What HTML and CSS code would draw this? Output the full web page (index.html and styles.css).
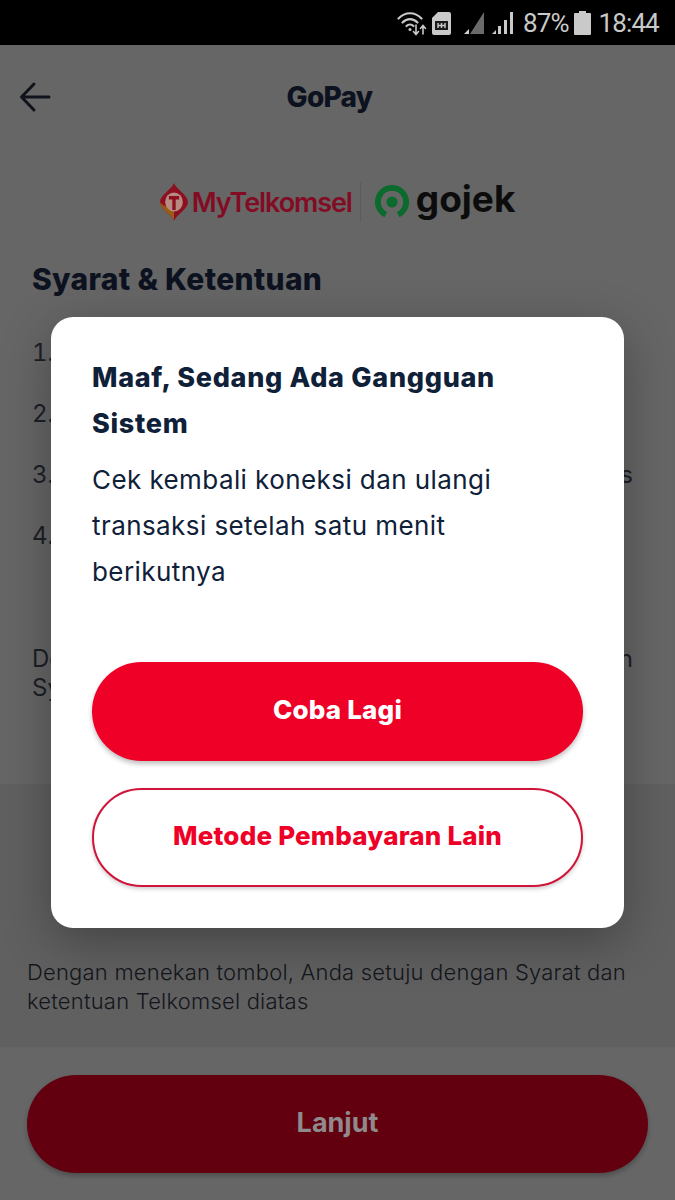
FILE: index.html
```html
<!DOCTYPE html>
<html lang="id">
<head>
<meta charset="utf-8">
<title>GoPay</title>
<link rel="stylesheet" href="styles.css">
</head>
<body>
<div class="screen">
  <div class="statusbar">
    <svg class="ic-wifi" width="32" height="26" viewBox="0 0 32 26" fill="none" stroke="#c9c9c9" stroke-linecap="round">
      <path d="M1.500 8.500C8 1.500 18 1.500 24.500 8.500" stroke-width="2.200"/>
      <path d="M5.500 12.500C10 8 16 8 20.500 12.500" stroke-width="2.200"/>
      <path d="M9.500 16C11.500 14 14.500 14 16.500 16" stroke-width="2.200"/>
      <circle cx="13" cy="19.500" r="1.500" fill="#c9c9c9" stroke="none"/>
      <path d="M19 15v9M16.500 21.500l2.500 3 2.500-3" stroke-width="1.600"/>
      <path d="M26 24v-8M23.500 18.500l2.500-3 2.500 3" stroke-width="1.600"/>
    </svg>
    <svg class="ic-sim" width="21" height="24" viewBox="0 0 21 24">
      <path d="M7 1h11a2 2 0 0 1 2 2v19a2 2 0 0 1-2 2H3a2 2 0 0 1-2-2V7z" fill="#c9c9c9"/>
      <path d="M4 10h13v9H4z" fill="#1a1a1a"/>
      <path d="M7 12v5M14 12v5M7 14.500h7M10.500 12v5" stroke="#c9c9c9" stroke-width="1.400" fill="none"/>
    </svg>
    <svg class="ic-sig1" width="22" height="24" viewBox="0 0 22 24">
      <path d="M21 1v22H7z" fill="#6a6a6a"/>
      <path d="M1 23l5-5v5z" fill="#d0d0d0"/>
    </svg>
    <svg class="ic-sig2" width="22" height="24" viewBox="0 0 22 24" fill="#c9c9c9">
      <path d="M0 23l4-4v4z"/>
      <rect x="6" y="15" width="3" height="8"/>
      <rect x="12" y="9" width="3" height="14"/>
      <rect x="18" y="1" width="3" height="22"/>
    </svg>
    <span class="st-pct">87%</span>
    <svg class="ic-bat" width="17" height="24" viewBox="0 0 17 24">
      <path d="M5 0h7v2h4a1 1 0 0 1 1 1v20a1 1 0 0 1-1 1H1a1 1 0 0 1-1-1V3a1 1 0 0 1 1-1h4z" fill="#c9c9c9"/>
    </svg>
    <span class="st-time">18:44</span>
  </div>

  <main class="content">
    <header class="appbar">
      <svg class="back" width="32" height="32" viewBox="0 0 32 32" fill="none" stroke="#10131c" stroke-width="3" stroke-linecap="round" stroke-linejoin="round">
        <path d="M30 16H3M15 3L2.500 16 15 29"/>
      </svg>
      <h1 class="appbar-title">GoPay</h1>
    </header>

    <div class="logos">
      <svg class="tsel-mark" width="28" height="38" viewBox="0 0 30 38" preserveAspectRatio="none">
        <path d="M15 0C17 6 30 12 30 19C30 26 17 32 15 38C13 32 0 26 0 19C0 12 13 6 15 0Z" fill="#8c1020"/>
        <path d="M15 38C13 32 0 26 0 19C4 24 12 26 15 26Z" fill="#9a5a18"/>
        <circle cx="15" cy="19" r="9.500" fill="#b78a82"/>
        <path d="M9.500 13h11v3.500h-3.700V27h-3.600V16.500H9.500z" fill="#8c1020"/>
      </svg>
      <span class="tsel-name">MyTelkomsel</span>
      <span class="logo-sep"></span>
      <svg class="gojek-mark" width="34" height="34" viewBox="0 0 34 34">
        <path d="M17 0a17 17 0 0 1 7.500 32.300l-2.600-5.300a11.200 11.200 0 1 0-9.800 0l-2.600 5.300A17 17 0 0 1 17 0z" fill="#0a6b2c"/>
        <circle cx="17" cy="17" r="5.500" fill="#0a6b2c"/>
      </svg>
      <span class="gojek-name">gojek</span>
    </div>

    <h2 class="terms-title">Syarat &amp; Ketentuan</h2>
    <ol class="terms">
      <li class="term">Pembayaran berlaku untuk pelanggan</li>
      <li class="term">Saldo GoPay harus mencukupi</li>
      <li class="term term-fill">Berlaku untuk pembelian paket yang lunas</li>
      <li class="term">Pembelian tidak dapat dibatalkan</li>
    </ol>
    <p class="terms-note"><span class="note-fill">Dengan melanjutkan, Anda menyetujui ketentuan</span><br>Syarat dan ketentuan layanan</p>
  </main>

  <section class="agree">
    <p class="agree-text">Dengan menekan tombol, Anda setuju dengan Syarat dan ketentuan Telkomsel diatas</p>
  </section>

  <footer class="footer">
    <button class="btn-next" type="button">Lanjut</button>
  </footer>

  <div class="modal" role="dialog">
    <h3 class="modal-title">Maaf, Sedang Ada Gangguan Sistem</h3>
    <p class="modal-body">Cek kembali koneksi dan ulangi transaksi setelah satu menit berikutnya</p>
    <div class="modal-actions">
      <button class="btn btn-primary" type="button">Coba Lagi</button>
      <button class="btn btn-outline" type="button">Metode Pembayaran Lain</button>
    </div>
  </div>
</div>
</body>
</html>
```
FILE: styles.css
```css
* { box-sizing: border-box; }
html, body { margin: 0; padding: 0; }
body { font-family: Inter, "Liberation Sans", sans-serif; background: #666; color: #10131c; }
h1, h2, h3, p, ol { margin: 0; padding: 0; }

.screen { position: relative; width: 675px; height: 1200px; display: flex; flex-direction: column; overflow: hidden; background: #666; }

.statusbar { height: 45px; flex: none; background: #000; display: flex; align-items: center; padding: 0 0 0 397px; color: #c9c9c9; font-family: Roboto, sans-serif; font-size: 26px; letter-spacing: -0.9px; white-space: nowrap; }
.ic-sim { margin-left: 2px; }
.ic-sig1 { margin-left: 11px; }
.ic-sig2 { margin-left: 7px; }
.st-pct { margin-left: 9px; }
.ic-bat { margin-left: 5px; }
.st-time { margin-left: 8px; }

.content { height: 739px; flex: none; padding: 0 32px; }

.appbar { height: 104px; position: relative; display: flex; align-items: center; justify-content: center; padding-right: 16px; }
.back { position: absolute; left: -13px; top: 36px; }
.appbar-title { font-size: 28px; font-weight: 800; letter-spacing: -0.7px; color: #0d1220; }

.logos { display: flex; align-items: center; justify-content: center; height: 48px; margin-top: 29px; }
.tsel-name { font-family: Inter, sans-serif; font-size: 27px; font-weight: 600; letter-spacing: -1.1px; color: #820c24; margin-left: 4px; }
.logo-sep { width: 1px; height: 40px; background: #5c5c5c; margin: 0 14px 0 8px; }
.gojek-name { font-family: Inter, sans-serif; font-size: 37px; font-weight: 700; color: #0c0c0c; margin-left: 7px; line-height: 36px; margin-top: -6px; }

.terms-title { font-size: 30px; font-weight: 800; letter-spacing: 0.3px; color: #0d1220; margin-top: 33px; line-height: 40px; }

.terms { list-style-position: inside; margin-top: 36px; font-size: 24px; line-height: 36px; color: #1c1f26; }
.term { margin-bottom: 25px; white-space: nowrap; overflow: hidden; width: 100%; }
.term-fill { width: 601px; text-align-last: justify; }

.terms-note { margin-top: 90px; font-size: 24px; line-height: 29px; color: #1c1f26; white-space: nowrap; }
.note-fill { display: inline-block; width: 601px; text-align-last: justify; }

.agree { height: 263px; flex: none; background: #606060; display: flex; flex-direction: column; justify-content: flex-end; padding: 0 27px 31px; }
.agree-text { font-size: 22px; font-weight: 300; letter-spacing: 0.2px; line-height: 29px; color: #14161c; }

.footer { flex: 1; padding: 28px 27px 0; }
.btn-next { display: block; width: 100%; height: 98px; padding-bottom: 4px; border: 0; border-radius: 49px; background: #620010; color: #8f8a8b; font-family: inherit; font-size: 27px; font-weight: 700; box-shadow: 0 3px 5px rgba(0,0,0,.25); }

.modal { position: absolute; left: 51px; top: 317px; width: 573px; height: 611px; background: #fff; border-radius: 22px; padding: 38px 41px 0; box-shadow: 0 14px 50px rgba(0,0,0,.3); }
.modal-title { max-width: 440px; font-size: 27px; font-weight: 800; letter-spacing: 0.7px; line-height: 46px; color: #0f2039; }
.modal-body { font-size: 26px; letter-spacing: 0.42px; line-height: 46px; color: #0f2039; margin-top: 10px; }
.modal-actions { position: absolute; left: 41px; right: 41px; top: 345px; display: flex; flex-direction: column; gap: 27px; }
.btn { height: 99px; padding-bottom: 5px; border-radius: 50px; font-family: inherit; font-size: 26px; font-weight: 800; letter-spacing: 0.2px; }
.btn-primary { border: 0; background: #ee0027; color: #fff; box-shadow: 0 3px 5px rgba(0,0,0,.25); }
.btn-outline { border: 2px solid #d01338; background: #fff; color: #ee0027; box-shadow: 0 2px 4px rgba(0,0,0,.2); }
```
